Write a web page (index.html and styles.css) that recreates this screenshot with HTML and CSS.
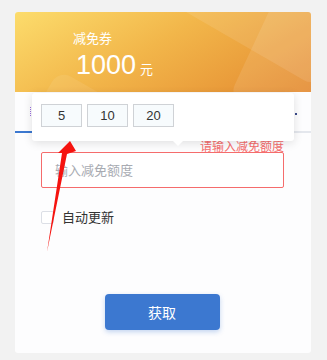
FILE: index.html
```html
<!DOCTYPE html>
<html lang="zh-CN">
<head>
  <meta charset="utf-8">
  <title>减免券</title>
  <link rel="stylesheet" href="styles.css">
</head>
<body>
  <div class="card">
    <div class="coupon-head">
      <span class="deco deco1"></span>
      <span class="deco deco2"></span>
      <span class="deco deco3"></span>
      <div class="coupon-title">减免券</div>
      <div class="coupon-amount"><span class="num">1000</span><span class="unit">元</span></div>
    </div>

    <div class="tabs">
      <span class="tab-dots"></span>
      <span class="tab-active"></span>
      <span class="tab-dot"></span>
    </div>

    <div class="form">
      <div class="err-tip">请输入减免额度</div>
      <div class="input-box">输入减免额度</div>
      <label class="check-row"><span class="check"></span>自动更新</label>
      <div class="btn-row"><a href="javascript: void 0;" class="btn-get">获取</a></div>
    </div>

    <div class="popover">
      <span class="quick">5</span>
      <span class="quick">10</span>
      <span class="quick">20</span>
      <span class="pop-arrow"></span>
    </div>
  </div>

  <svg class="mark" width="327" height="360" viewBox="0 0 327 360">
    <polygon points="70,141 76,151 67,154 47,252 62,153 58,153" fill="#f5130f"/>
  </svg>
</body>
</html>
```

FILE: styles.css
```css
html, body {
  padding: 0;
  margin: 0;
}
body {
  position: relative;
  width: 327px;
  height: 360px;
  background-color: #f2f2f2;
  font-family: "Liberation Sans", "Noto Sans CJK SC", sans-serif;
  padding-top: 12px;
  box-sizing: border-box;
}
.card {
  position: relative;
  width: 296px;
  height: 341px;
  margin-left: 15px;
  background-color: #fdfdfe;
  border-radius: 3px;
}
.coupon-head {
  position: relative;
  overflow: hidden;
  height: 80px;
  padding: 18px 0 0 58px;
  box-sizing: border-box;
  border-radius: 3px 3px 0 0;
  background: linear-gradient(150deg, #fcdc6c 0%, #f2b64a 45%, #e48a30 100%);
  color: #fff;
}
.deco {
  position: absolute;
  background-color: rgba(255, 255, 255, .1);
  border-radius: 14px;
}
.deco1 {
  left: 170px;
  top: -70px;
  width: 170px;
  height: 110px;
  transform: rotate(30deg);
}
.deco2 {
  left: 235px;
  top: -10px;
  width: 90px;
  height: 120px;
  transform: rotate(25deg);
}
.deco3 {
  left: 30px;
  top: 70px;
  width: 60px;
  height: 40px;
  transform: rotate(30deg);
  background-color: rgba(255, 255, 255, .08);
}
.coupon-title {
  position: relative;
  font: 13px/16px "Noto Sans CJK SC", sans-serif;
}
.coupon-amount {
  position: relative;
  margin-top: 4px;
  margin-left: 3px;
  line-height: 30px;
}
.coupon-amount .num {
  font-size: 27px;
  font-family: "Liberation Sans", sans-serif;
}
.coupon-amount .unit {
  margin-left: 4px;
  font: 13px "Noto Sans CJK SC", sans-serif;
}
.tabs {
  position: relative;
  height: 39px;
  border-bottom: 2px solid #e4e7ed;
}
.tab-dots {
  position: absolute;
  left: 15px;
  top: 15px;
  width: 1px;
  height: 9px;
  border-left: 1px dotted #9b6ee0;
}
.tab-dot {
  position: absolute;
  right: 14px;
  top: 21px;
  width: 2px;
  height: 2px;
  background-color: #3a4a8a;
}
.tab-active {
  position: absolute;
  left: 0;
  bottom: -2px;
  width: 70px;
  height: 2px;
  background-color: #3c78d0;
}
.form {
  padding: 6px 27px 0 26px;
}
.err-tip {
  text-align: right;
  font: 12px/14px "Noto Sans CJK SC", sans-serif;
  color: #f56c6c;
}
.input-box {
  height: 36px;
  margin-top: -1px;
  padding-left: 13px;
  box-sizing: border-box;
  border: 1px solid #f56c6c;
  border-radius: 2px;
  background-color: #fff;
  font: 13px/34px "Noto Sans CJK SC", sans-serif;
  color: #a8abb2;
}
.check-row {
  display: flex;
  align-items: center;
  margin-top: 21px;
  font: 13px/16px "Noto Sans CJK SC", sans-serif;
  color: #333;
}
.check {
  width: 11px;
  height: 11px;
  margin-right: 8px;
  border: 1px solid #dcdfe6;
  border-radius: 2px;
  background-color: #fff;
}
.btn-row {
  display: flex;
  justify-content: center;
  margin-top: 69px;
  margin-left: -1px;
}
.btn-get {
  width: 115px;
  height: 36px;
  border-radius: 4px;
  background-color: #3c78d0;
  box-shadow: 0 2px 5px rgba(60, 120, 208, .3);
  text-decoration: none;
  text-align: center;
  font: 14px/36px "Noto Sans CJK SC", sans-serif;
  color: #fff;
}
.popover {
  position: absolute;
  left: 17px;
  top: 81px;
  display: flex;
  gap: 5px;
  width: 262px;
  height: 48px;
  padding: 11px 9px 0;
  box-sizing: border-box;
  background-color: #fff;
  border-radius: 3px;
  box-shadow: 0 2px 10px rgba(0, 0, 0, .12);
}
.quick {
  width: 41px;
  height: 23px;
  box-sizing: border-box;
  border: 1px solid #cfd2d6;
  background-color: #f7fbfd;
  text-align: center;
  font: 13px/21px "Liberation Sans", sans-serif;
  color: #333;
}
.pop-arrow {
  position: absolute;
  left: 140px;
  bottom: -5px;
  width: 0;
  height: 0;
  border-left: 6px solid transparent;
  border-right: 6px solid transparent;
  border-top: 6px solid #fff;
}
.mark {
  position: absolute;
  left: 0;
  top: 0;
}
```
